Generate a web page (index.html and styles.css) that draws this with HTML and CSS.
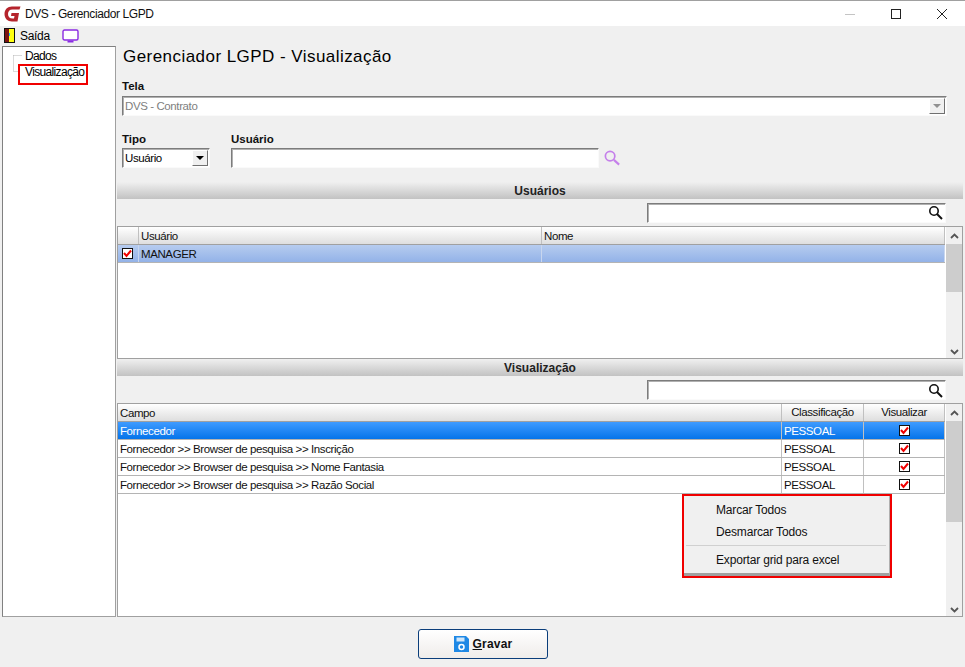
FILE: index.html
```html
<!DOCTYPE html>
<html lang="pt-BR">
<head>
<meta charset="utf-8">
<title>DVS - Gerenciador LGPD</title>
<link rel="stylesheet" href="styles.css">
</head>
<body>
<div class="window">
  <header class="titlebar">
    <svg class="logo" viewBox="0 0 17 16" width="17" height="16"><path d="M16.500 0.500H8C3.500 0.500 0.500 3.500 0.500 8C0.500 12.500 3.500 15.500 8 15.500H13.500L15 7H7.500L7 10H10.500L10 12.500H8.500C5.500 12.500 4 10.500 4 8C4 5.500 5.500 3.500 8.500 3.500H15.500Z" fill="#b5242c"/></svg>
    <span class="title-text">DVS - Gerenciador LGPD</span>
    <div class="win-buttons">
      <svg width="12" height="12" viewBox="0 0 12 12"><path d="M1 6.500H11" stroke="#c4c4c4"/></svg>
      <svg width="12" height="12" viewBox="0 0 12 12"><rect x="1.500" y="1.500" width="9" height="9" fill="none" stroke="#222"/></svg>
      <svg width="12" height="12" viewBox="0 0 12 12"><path d="M1 1L11 11M11 1L1 11" stroke="#222"/></svg>
    </div>
  </header>
  <nav class="toolbar">
    <svg class="door" width="11" height="15" viewBox="0 0 11 15"><rect width="11" height="15" fill="#111"/><rect x="1" y="1" width="9" height="13" fill="#ffff10"/><path d="M1 1H5V14H1Z" fill="#7a1212"/><rect x="5" y="5" width="1" height="3" fill="#19c6e6"/></svg>
    <span class="toolbar-label">Saída</span>
    <svg class="monitor" width="17" height="14" viewBox="0 0 17 14"><rect x="1" y="1" width="15" height="10" rx="1.500" fill="#fff" stroke="#8a2be2" stroke-width="1.400"/><rect x="5.500" y="11.500" width="6" height="2" fill="#8a2be2"/></svg>
  </nav>
  <div class="body">
    <aside class="tree">
      <svg class="tree-lines" width="10" height="24" viewBox="0 0 10 24"><path d="M0.500 0.500V16.500M0.500 0.500H9M0.500 16.500H6" stroke="#b4b4b4" stroke-dasharray="1 1" fill="none"/></svg>
      <div class="tree-item">Dados</div>
      <div class="tree-item">Visualização</div>
      <div class="tree-highlight"></div>
    </aside>
    <main class="main">
      <h1 class="heading">Gerenciador LGPD - Visualização</h1>
      <div class="form-block">
        <label class="label">Tela</label>
        <div class="combo combo-disabled">
          <span>DVS - Contrato</span>
          <span class="arrow arrow-disabled"></span>
        </div>
        <div class="form-row">
          <div class="field-tipo">
            <label class="label">Tipo</label>
            <div class="combo">
              <span>Usuário</span>
              <span class="arrow"></span>
            </div>
          </div>
          <div class="field-user">
            <label class="label">Usuário</label>
            <div class="field-user-row">
              <div class="input input-user"></div>
              <svg width="18" height="18" viewBox="0 0 19 18"><circle cx="7.500" cy="7" r="5" fill="none" stroke="#c580ea" stroke-width="1.800"/><path d="M11.500 11L17 16" stroke="#c580ea" stroke-width="2.200"/></svg>
            </div>
          </div>
        </div>
      </div>
      <div class="band band-first">Usuários</div>
      <div class="search-row">
        <div class="input input-search">
          <svg width="15" height="15" viewBox="0 0 15 15"><circle cx="6" cy="6" r="4.200" fill="none" stroke="#111" stroke-width="1.600"/><path d="M9 9L14 14" stroke="#111" stroke-width="2"/></svg>
        </div>
      </div>
      <section class="grid grid-users">
        <div class="grid-content">
          <div class="row head users-cols">
            <div class="cell"></div><div class="cell">Usuário</div><div class="cell">Nome</div>
          </div>
          <div class="row users-cols row-soft">
            <div class="cell cell-center"><span class="check"><svg width="9" height="9" viewBox="0 0 9 9"><path d="M1 4L3.500 7L8 1.500" stroke="#f00000" stroke-width="2" fill="none"/></svg></span></div>
            <div class="cell">MANAGER</div><div class="cell"></div>
          </div>
        </div>
        <div class="scrollbar">
          <svg class="chev" width="9" height="6" viewBox="0 0 9 6"><path d="M1 5L4.500 1.500L8 5" stroke="#555" stroke-width="1.800" fill="none"/></svg>
          <div class="track"><div class="thumb thumb-users"></div></div>
          <svg class="chev" width="9" height="6" viewBox="0 0 9 6"><path d="M1 1L4.500 4.500L8 1" stroke="#555" stroke-width="1.800" fill="none"/></svg>
        </div>
      </section>
      <div class="band">Visualização</div>
      <div class="search-row">
        <div class="input input-search">
          <svg width="15" height="15" viewBox="0 0 15 15"><circle cx="6" cy="6" r="4.200" fill="none" stroke="#111" stroke-width="1.600"/><path d="M9 9L14 14" stroke="#111" stroke-width="2"/></svg>
        </div>
      </div>
      <section class="grid grid-fields">
        <div class="grid-content">
          <div class="row head fields-cols">
            <div class="cell">Campo</div><div class="cell cell-center">Classificação</div><div class="cell cell-center">Visualizar</div>
          </div>
          <div class="row fields-cols row-selected">
            <div class="cell">Fornecedor</div><div class="cell">PESSOAL</div>
            <div class="cell cell-center"><span class="check check-square"><svg width="9" height="9" viewBox="0 0 9 9"><path d="M1 4L3.500 7L8 1.500" stroke="#f00000" stroke-width="2" fill="none"/></svg></span></div>
          </div>
          <div class="row fields-cols">
            <div class="cell">Fornecedor &gt;&gt; Browser de pesquisa &gt;&gt; Inscrição</div><div class="cell">PESSOAL</div>
            <div class="cell cell-center"><span class="check check-square"><svg width="9" height="9" viewBox="0 0 9 9"><path d="M1 4L3.500 7L8 1.500" stroke="#f00000" stroke-width="2" fill="none"/></svg></span></div>
          </div>
          <div class="row fields-cols">
            <div class="cell">Fornecedor &gt;&gt; Browser de pesquisa &gt;&gt; Nome Fantasia</div><div class="cell">PESSOAL</div>
            <div class="cell cell-center"><span class="check check-square"><svg width="9" height="9" viewBox="0 0 9 9"><path d="M1 4L3.500 7L8 1.500" stroke="#f00000" stroke-width="2" fill="none"/></svg></span></div>
          </div>
          <div class="row fields-cols">
            <div class="cell">Fornecedor &gt;&gt; Browser de pesquisa &gt;&gt; Razão Social</div><div class="cell">PESSOAL</div>
            <div class="cell cell-center"><span class="check check-square"><svg width="9" height="9" viewBox="0 0 9 9"><path d="M1 4L3.500 7L8 1.500" stroke="#f00000" stroke-width="2" fill="none"/></svg></span></div>
          </div>
        </div>
        <div class="scrollbar">
          <svg class="chev" width="9" height="6" viewBox="0 0 9 6"><path d="M1 5L4.500 1.500L8 5" stroke="#555" stroke-width="1.800" fill="none"/></svg>
          <div class="track"><div class="thumb thumb-fields"></div></div>
          <svg class="chev" width="9" height="6" viewBox="0 0 9 6"><path d="M1 1L4.500 4.500L8 1" stroke="#555" stroke-width="1.800" fill="none"/></svg>
        </div>
      </section>
    </main>
  </div>
  <footer class="footer">
    <button class="save" type="button">
      <svg width="15" height="16" viewBox="0 0 15 16"><path d="M0 0H12L15 3V16H0Z" fill="#1e88e5"/><rect x="2.500" y="1.500" width="8" height="4" fill="#cfe6fa"/><circle cx="7.500" cy="11" r="2.500" fill="none" stroke="#fff" stroke-width="1.500"/></svg>
      <span><u>G</u>ravar</span>
    </button>
  </footer>
</div>
<div class="context-menu">
  <div class="menu-inner">
    <div class="menu-item">Marcar Todos</div>
    <div class="menu-item">Desmarcar Todos</div>
    <div class="menu-sep"></div>
    <div class="menu-item">Exportar grid para excel</div>
  </div>
</div>
</body>
</html>
```
FILE: styles.css
```css
* { box-sizing: border-box; }
html, body { margin: 0; padding: 0; }
body {
  width: 965px;
  height: 667px;
  overflow: hidden;
  position: relative;
  background: #f0f0f0;
  font-family: "Liberation Sans", Arial, sans-serif;
  font-size: 11px;
  color: #000;
}
.window { display: flex; flex-direction: column; height: 667px; }

.titlebar {
  height: 26px;
  background: #fff;
  border-top: 1px solid #a0a0a0;
  display: flex;
  align-items: center;
  padding-left: 4px;
}
.logo { margin-right: 4px; }
.title-text { font-size: 12px; color: #111; letter-spacing: -0.4px; }
.win-buttons { margin-left: auto; display: flex; gap: 34px; padding-right: 17px; }
.win-buttons svg { display: block; }

.toolbar { height: 18px; display: flex; align-items: center; padding: 1px 0 0 4px; }
.door { margin-right: 5px; }
.toolbar-label { font-size: 12px; margin-right: 12px; letter-spacing: -0.3px; }

.body { display: flex; height: 573px; }
.tree {
  width: 114px;
  margin: 2px 1px 0 2px;
  height: 571px;
  background: #fff;
  border: 1px solid #a0a0a0;
  border-top-color: #808080;
  border-left-color: #808080;
  padding: 1px 0 0 22px;
  position: relative;
}
.tree-item { height: 16px; line-height: 16px; font-size: 12px; letter-spacing: -0.65px; }
.tree-lines { position: absolute; left: 10px; top: 8px; }
.tree-highlight {
  position: absolute;
  left: 15px;
  top: 17px;
  width: 70px;
  height: 21px;
  border: 2px solid #f00000;
}

.main { width: 846px; display: flex; flex-direction: column; }
.heading {
  margin: 0;
  height: 36px;
  padding: 2px 0 0 6px;
  font-size: 17px;
  line-height: 22px;
  font-weight: 400;
  letter-spacing: 0.45px;
}
.form-block { padding: 0 0 0 5px; height: 102px; }
.label { display: block; font-weight: 700; font-size: 11.500px; height: 16px; line-height: 12px; color: #111; }
.form-row .label { line-height: 14px; }
.combo {
  height: 20px;
  background: #fff;
  border: 1px solid;
  border-color: #7c7c7c #fafafa #fafafa #7c7c7c;
  box-shadow: inset 1px 1px 0 #b0b0b0;
  display: flex;
  align-items: center;
  justify-content: space-between;
  padding: 0 1px 0 2px;
  font-size: 11.500px;
  letter-spacing: -0.4px;
}
.combo-disabled { width: 825px; color: #808080; background: #fff; }
.arrow {
  width: 16px;
  height: 16px;
  background: #f0f0f0;
  border: 1px solid;
  border-color: #fff #707070 #707070 #fff;
  position: relative;
}
.arrow::after {
  content: "";
  position: absolute;
  left: 3px;
  top: 5px;
  border-left: 4px solid transparent;
  border-right: 4px solid transparent;
  border-top: 4px solid #000;
}
.arrow-disabled::after { border-top-color: #909090; }
.form-row { display: flex; margin-top: 16px; gap: 21px; }
.field-tipo { width: 88px; }
.field-user { flex: 1; }
.field-user-row { display: flex; align-items: center; gap: 4px; }
.input {
  background: #fff;
  border: 1px solid;
  border-color: #7c7c7c #fafafa #fafafa #7c7c7c;
  box-shadow: inset 1px 1px 0 #b0b0b0;
}
.input-user { width: 368px; height: 20px; }

.band {
  height: 17px;
  background: linear-gradient(#f0f0f0, #c2c2c2);
  text-align: center;
  font-weight: 700;
  font-size: 12px;
  line-height: 19px;
  color: #222;
}
.search-row { height: 27px; padding: 4px 0 0 530px; }
.input-search {
  width: 299px;
  height: 20px;
  display: flex;
  align-items: center;
  justify-content: flex-end;
  padding-right: 2px;
}

.grid { display: flex; background: #fff; border: 1px solid #a0a0a0; }
.grid-users { height: 134px; }
.grid-fields { height: 214px; }
.grid-content { width: 828px; }
.row { display: grid; height: 18px; border-bottom: 1px solid #b4b4b4; line-height: 19px; font-size: 11.500px; letter-spacing: -0.4px; }
.users-cols { grid-template-columns: 21px 403px 1fr; }
.users-cols .cell-center { padding-right: 2px; }
.fields-cols { grid-template-columns: 664px 82px 1fr; }
.cell { padding-left: 2px; border-right: 1px solid #c0c0c0; white-space: nowrap; overflow: hidden; color: #111; }
.cell-center { display: flex; align-items: center; justify-content: center; padding-left: 0; }
.head { background: linear-gradient(#fff, #dedede); border-bottom-color: #a0a0a0; }
.row-soft { background: linear-gradient(#b6ccef, #93b2e8); }
.row-soft .cell { border-right-color: #c8d6ee; }
.row-selected { background: linear-gradient(#3f9bff, #0574ea); }
.row-selected .cell { color: #fff; }
.check {
  width: 11px;
  height: 11px;
  background: #fff;
  border: 1px solid #111;
  display: flex;
  align-items: center;
  justify-content: center;
}
.scrollbar {
  width: 16px;
  margin-left: 1px;
  background: #f0f0f0;
  display: flex;
  flex-direction: column;
  align-items: center;
  padding: 6px 0 3px;
}
.track { flex: 1; width: 100%; margin: 5px 0 4px; }
.thumb { background: #cdcdcd; width: 100%; }
.thumb-users { height: 48px; }
.thumb-fields { height: 101px; }
.chev { display: block; }

.footer { flex: 1; display: flex; justify-content: center; padding-top: 12px; padding-left: 1px; }
.save {
  width: 130px;
  height: 30px;
  border: 1px solid #0a3d7a;
  border-radius: 3px;
  background: linear-gradient(#fff, #efecea);
  display: flex;
  align-items: center;
  justify-content: center;
  gap: 4px;
  font-family: "Liberation Sans", Arial, sans-serif;
  font-size: 12px;
  font-weight: 700;
  padding: 0;
  color: #111;
  letter-spacing: 0.2px;
}

.context-menu {
  position: absolute;
  left: 682px;
  top: 494px;
  width: 210px;
  height: 84px;
  border: 2px solid #f00000;
  background: #f0f0f0;
}
.menu-inner {
  height: 100%;
  padding: 3px 3px 0 32px;
  border-right: 1px solid #b0b0b0;
  border-bottom: 3px solid #a0a0a0;
}
.menu-item { height: 22px; line-height: 22px; font-size: 12px; color: #111; letter-spacing: -0.17px; }
.menu-sep { height: 1px; background: #d0d0d0; margin: 2px 0 3px -30px; }
```
